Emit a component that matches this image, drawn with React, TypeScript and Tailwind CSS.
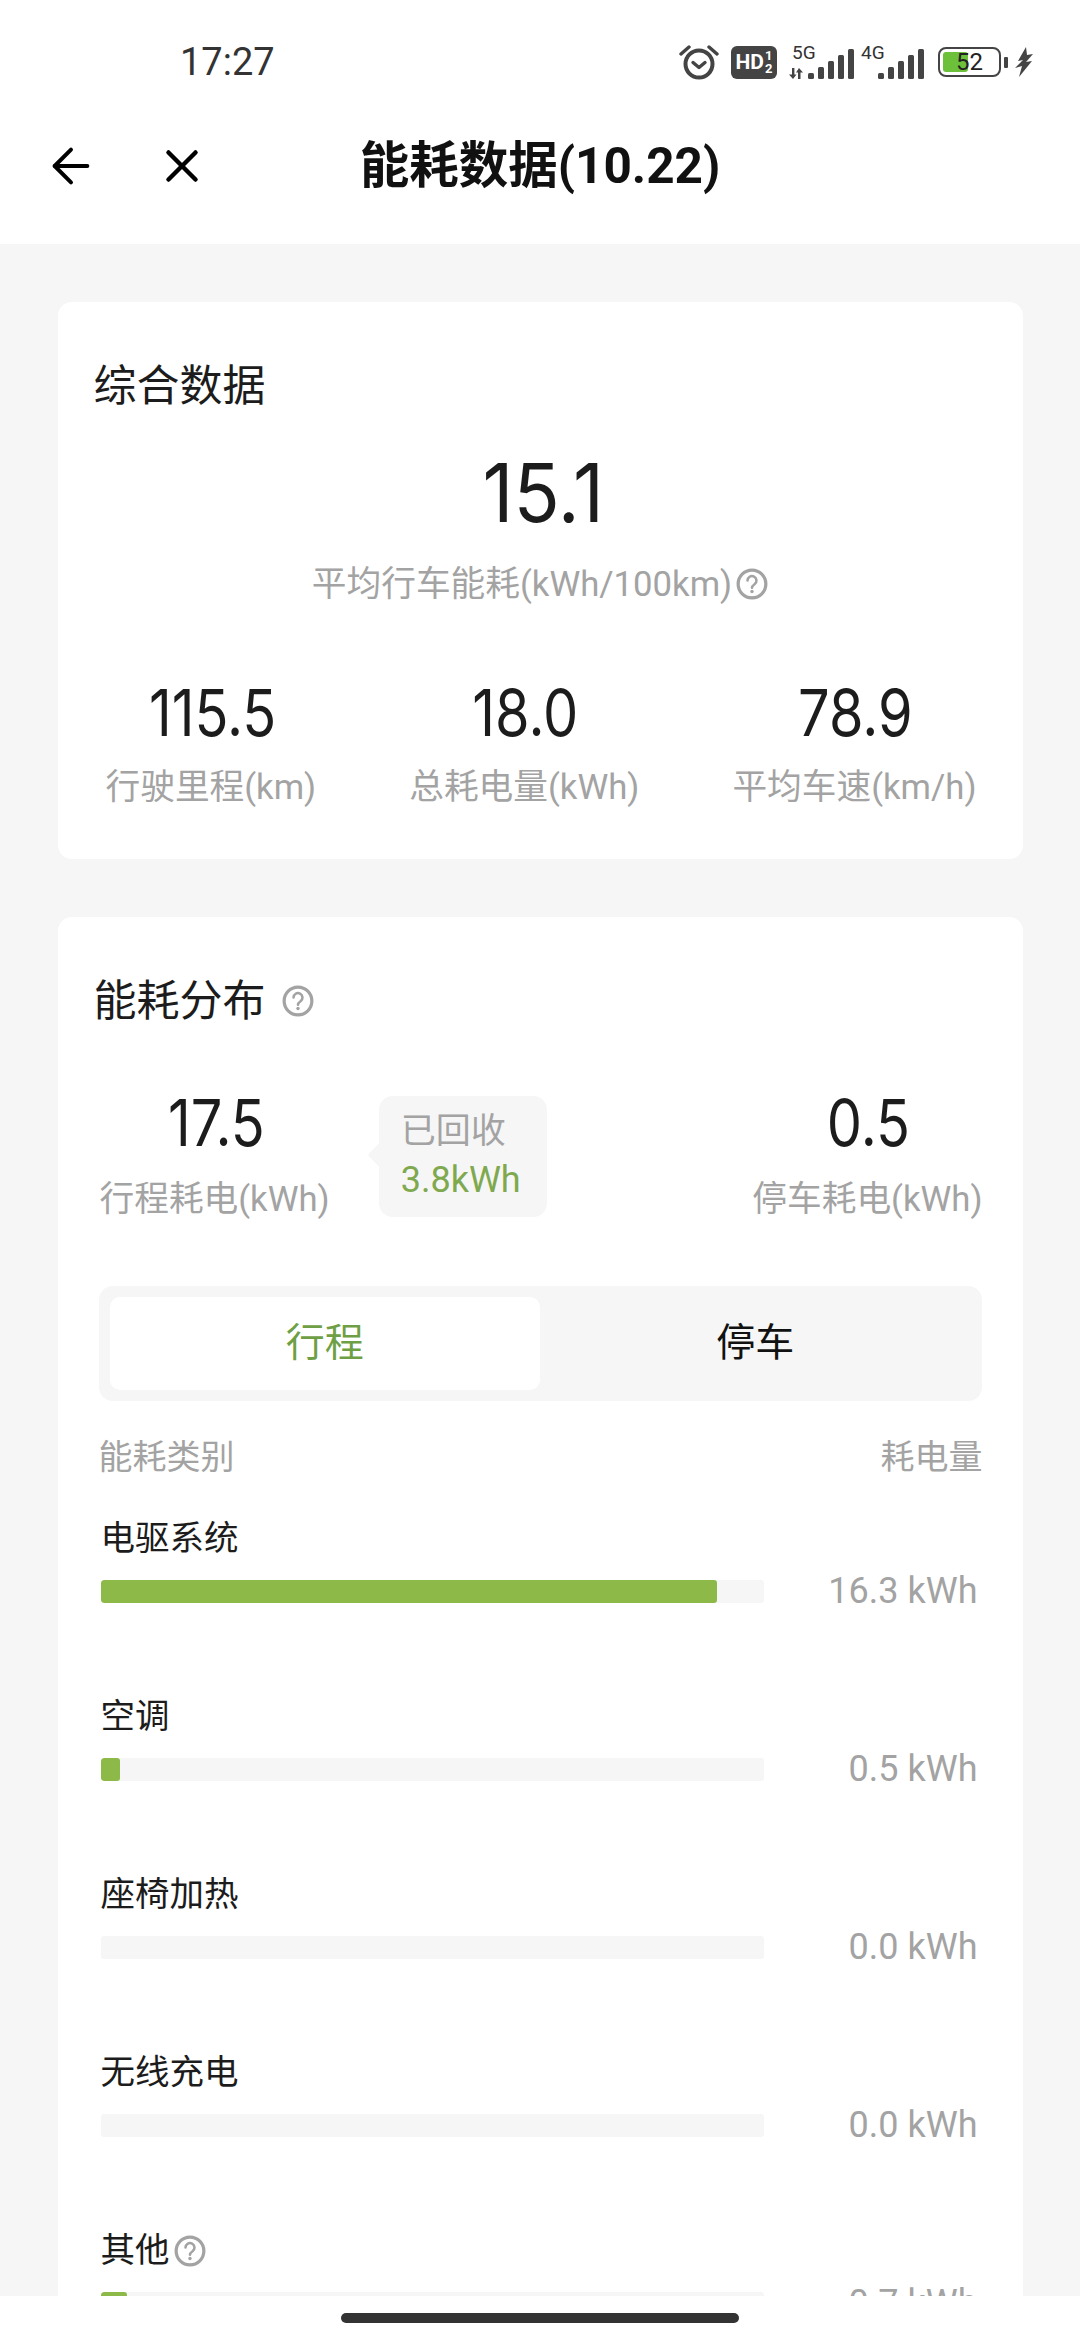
import { ArrowLeft, X } from "lucide-react";

const cjk = "font-['Roboto','Noto_Sans_CJK_SC',sans-serif]";

const rows = [
  { name: "电驱系统", value: "16.3 kWh", pct: 93 },
  { name: "空调", value: "0.5 kWh", pct: 3 },
  { name: "座椅加热", value: "0.0 kWh", pct: 0 },
  { name: "无线充电", value: "0.0 kWh", pct: 0 },
  { name: "其他", value: "0.7 kWh", pct: 4, help: true },
];

function Help({ size = 32 }: { size?: number }) {
  return (
    <svg width={size} height={size} viewBox="0 0 30 30" fill="none" className="shrink-0">
      <circle cx="15" cy="15" r="13" stroke="#a3a3a3" strokeWidth="3" />
      <path d="M10.8 11.8a4.2 4.2 0 1 1 6.6 3.4c-1.4 1-2.4 1.8-2.4 3.4" stroke="#a3a3a3" strokeWidth="2.4" strokeLinecap="round" />
      <circle cx="15" cy="22" r="1.6" fill="#a3a3a3" />
    </svg>
  );
}

// big figures: narrow digits with a thin "1"
function Num({ children, big }: { children: string; big?: boolean }) {
  return (
    <div
      className={`font-['Inter',sans-serif] text-[#1c1c1c] ${
        big
          ? "scale-x-[0.94] pl-[6px] text-[81px] leading-[88px]"
          : "scale-x-[0.86] pl-[3px] text-[65px] leading-[72px]"
      }`}
    >
      {children}
    </div>
  );
}

function Signal() {
  return (
    <div className="flex items-end gap-[4px]">
      {[6, 12, 18, 24, 30].map((h) => (
        <div key={h} className="w-[6px] rounded-[1.5px] bg-[#444]" style={{ height: h }} />
      ))}
    </div>
  );
}

function StatusBar() {
  return (
    <div className="flex h-[124px] items-center justify-between pl-[180px] pr-[47px] text-[#333]">
      <span className="text-[38px] leading-none">17:27</span>
      <div className="flex items-center">
        <svg width="40" height="36" viewBox="0 0 40 36" fill="none">
          <circle cx="20" cy="20" r="13.5" stroke="#444" strokeWidth="4" />
          <path d="M14 18.5l6 5 6-5" stroke="#444" strokeWidth="3.4" strokeLinecap="round" strokeLinejoin="round" />
          <path d="M2 10l8-7M38 10l-8-7" stroke="#444" strokeWidth="3.4" strokeLinecap="round" />
        </svg>
        <div className="ml-[12px] flex h-[33px] w-[46px] items-center justify-center rounded-[6px] bg-[#444] text-white">
          <span className="text-[21px] font-bold leading-none">HD</span>
          <span className="ml-[1px] flex flex-col text-[13px] font-bold leading-[13px]">
            <span>1</span>
            <span>2</span>
          </span>
        </div>
        <div className="relative ml-[11px] h-[33px] w-[66px]">
          <span className="absolute left-[4px] top-[-3px] text-[19px] leading-none">5G</span>
          <div className="absolute bottom-0 right-0">
            <Signal />
          </div>
          <svg width="16" height="11" viewBox="0 0 16 11" className="absolute bottom-0 left-0" fill="#444">
            <path d="M4 0h2.4v6.5H8.500L5 11 1 6.500h3zM11 0l4 4.500h-2.500V11H10V4.500H8z" />
          </svg>
        </div>
        <div className="relative ml-[7px] h-[33px] w-[63px]">
          <span className="absolute left-0 top-[-3px] text-[19px] leading-none">4G</span>
          <div className="absolute bottom-0 right-0">
            <Signal />
          </div>
        </div>
        <div className="ml-[14px] flex h-[30px] w-[63px] items-center rounded-[8px] border-[2.5px] border-[#444] p-[3px]">
          <div className="relative h-full w-full">
            <div className="h-full w-[47%] rounded-[3px] bg-[#6cc03a]" />
            <span className="absolute inset-0 flex items-center justify-center text-[24px] leading-none text-[#222]">52</span>
          </div>
        </div>
        <div className="ml-[3px] h-[11px] w-[4px] rounded-[1px] bg-[#444]" />
        <svg width="18" height="30" viewBox="0 0 18 30" className="ml-[7px]" fill="#444">
          <path d="M11 0L3 14l5-1-8 8 7-2-3 11 13-16-6 1 7-8-6 1z" />
        </svg>
      </div>
    </div>
  );
}

function Header() {
  return (
    <div className="flex h-[120px] items-start bg-white pt-[14px]">
      <div className="flex w-[300px] items-center pl-[39px] text-black">
        <ArrowLeft strokeWidth={1.7} className="h-[56px] w-[64px]" />
        <X strokeWidth={2} className="ml-[52px] size-[54px]" />
      </div>
      <h1 className="flex-1 text-center text-[49.5px] font-bold leading-[56px] text-[#111]">能耗数据(10.22)</h1>
      <div className="w-[300px]" />
    </div>
  );
}

export default function App() {
  return (
    <div className={`flex h-[2340px] w-[1080px] flex-col overflow-hidden bg-white ${cjk}`}>
      <StatusBar />
      <Header />
      <main className="flex min-h-0 flex-1 flex-col items-center gap-[58px] overflow-hidden bg-[#f6f6f6] pt-[58px]">
        <section className="h-[557px] w-[965px] shrink-0 rounded-[14px] bg-white">
          <h2 className="pl-[36px] pt-[57px] text-[43px] leading-[54px] text-[#1c1c1c]">综合数据</h2>
          <div className="mt-[36px] text-center">
            <Num big>15.1</Num>
          </div>
          <div className="mt-[24px] flex items-center justify-center text-[34.7px] leading-[46px] text-[#a3a3a3]">
            平均行车能耗(kWh/100km)
            <span className="ml-[4px]"><Help /></span>
          </div>
          <div className="mt-[70px] flex justify-between pl-[48px] pr-[46px] text-center">
            {[
              ["115.5", "行驶里程(km)"],
              ["18.0", "总耗电量(kWh)"],
              ["78.9", "平均车速(km/h)"],
            ].map(([v, l]) => (
              <div key={l}>
                <Num>{v}</Num>
                <div className="mt-[15px] text-[34.7px] leading-[46px] text-[#a3a3a3]">{l}</div>
              </div>
            ))}
          </div>
        </section>

        <section className="w-[965px] shrink-0 rounded-[14px] bg-white">
          <div className="flex items-center pl-[36px] pt-[57px]">
            <h2 className="text-[43px] leading-[54px] text-[#1c1c1c]">能耗分布</h2>
            <span className="ml-[16px]"><Help /></span>
          </div>

          <div className="mt-[68px] flex items-start pl-[42px] pr-[40px]">
            <div className="-mt-[9px] text-center">
              <Num>17.5</Num>
              <div className="mt-[17px] text-[34.7px] leading-[46px] text-[#a3a3a3]">行程耗电(kWh)</div>
            </div>
            <div className="relative ml-[49px] h-[121px] w-[168px] rounded-[14px] bg-[#f6f6f6] pl-[22px] pt-[12px]">
              <div className="absolute left-[-8px] top-[50px] size-[18px] rotate-45 rounded-[3px] bg-[#f6f6f6]" />
              <div className="relative text-[35px] leading-[48px] text-[#a3a3a3]">已回收</div>
              <div className="relative text-[36px] leading-[48px] text-[#7fa94f]">3.8kWh</div>
            </div>
            <div className="-mt-[9px] ml-auto text-center">
              <Num>0.5</Num>
              <div className="mt-[17px] text-[34.7px] leading-[46px] text-[#a3a3a3]">停车耗电(kWh)</div>
            </div>
          </div>

          <div className="ml-[41px] mt-[64px] flex h-[115px] w-[883px] rounded-[14px] bg-[#f6f6f6] p-[11px]">
            <div className="flex flex-1 items-center justify-center rounded-[10px] bg-white text-[39px] text-[#6f9f45]">行程</div>
            <div className="flex flex-1 items-center justify-center text-[39px] text-[#111]">停车</div>
          </div>

          <div className="mt-[36px] flex justify-between pl-[41px] pr-[40px] text-[34px] leading-[40px] text-[#a3a3a3]">
            <span>能耗类别</span>
            <span>耗电量</span>
          </div>

          <div className="mt-[14px] flex flex-col gap-[66px] pl-[43px] pr-[45px]">
            {rows.map((r) => (
              <div key={r.name} className="flex h-[112px] items-end">
                <div className="w-[663px]">
                  <div className="flex h-[46px] items-center text-[34.5px] text-[#1c1c1c]">
                    {r.name}
                    {r.help && <span className="ml-[4px]"><Help /></span>}
                  </div>
                  <div className="mt-[18px] h-[23px] overflow-hidden rounded-[3px] bg-[#f6f6f6]">
                    {r.pct > 0 && <div className="h-full rounded-[3px] bg-[#8cb947]" style={{ width: `${r.pct}%` }} />}
                  </div>
                </div>
                <div className="-mb-[11px] flex-1 text-right text-[36px] leading-[46px] text-[#a3a3a3]">{r.value}</div>
              </div>
            ))}
          </div>
        </section>
      </main>
      <div className="flex h-[44px] shrink-0 justify-center bg-white pt-[17px]">
        <div className="h-[10px] w-[398px] rounded-full bg-[#333]" />
      </div>
    </div>
  );
}
